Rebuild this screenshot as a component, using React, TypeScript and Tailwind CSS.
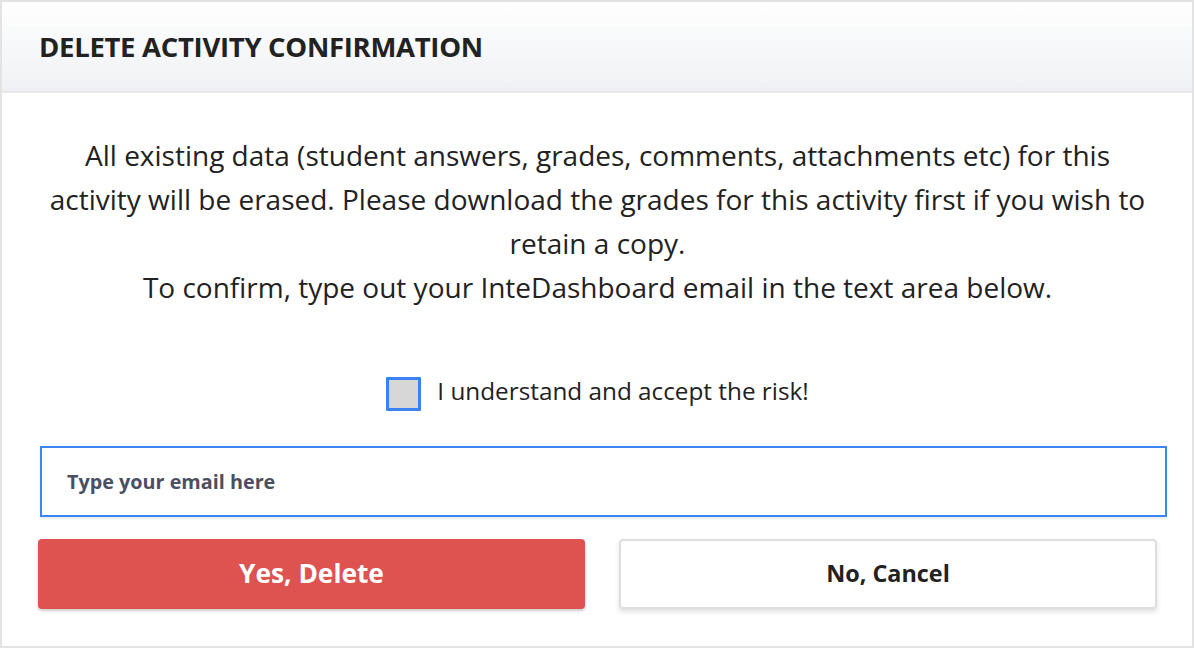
import React from "react";

export default function App() {
  return (
    <div
      className="w-[1194px] h-[648px] bg-white border-2 border-[#e3e3e3] flex flex-col text-[#222]"
      style={{ fontFamily: '"Open Sans", "Noto Sans", Arial, sans-serif' }}
    >
      <div className="h-[91px] shrink-0 bg-gradient-to-b from-white to-[#eff1f4] border-b-2 border-[#e8e8e8] flex items-center px-[37px]">
        <h1 className="text-[27.5px] font-bold tracking-[-0.3px] text-[#222]">DELETE ACTIVITY CONFIRMATION</h1>
      </div>
      <div className="flex flex-col pl-[36px] pr-[35px] pt-[40px]">
        <div className="flex flex-col items-center text-[28px] leading-[44px] text-[#222] whitespace-nowrap">
          <p>All existing data (student answers, grades, comments, attachments etc) for this</p>
          <p>activity will be erased. Please download the grades for this activity first if you wish to</p>
          <p>retain a copy.</p>
          <p>To confirm, type out your InteDashboard email in the text area below.</p>
        </div>
        <div className="mt-[68px] flex items-center justify-center gap-[16px]">
          <span className="w-[35px] h-[34px] border-[3px] border-[#3c82f6] bg-[#d7d7d7] rounded-[1px]" />
          <span className="text-[24.3px] text-[#222] -mt-[6px]">I understand and accept the risk!</span>
        </div>
        <div className="mt-[35px] ml-[2px] w-[1127px] h-[71px] border-2 border-[#3d85f2] flex items-center pl-[25px] shadow-[0_2px_2px_rgba(0,0,0,0.08)]">
          <span className="text-[19.8px] font-bold text-[#4a5061]">Type your email here</span>
        </div>
        <div className="mt-[22px] flex gap-[34px]">
          <button className="w-[548px] h-[70px] rounded-[4px] bg-[#de524f] text-white text-[26.3px] font-bold shadow-[0_2px_3px_rgba(0,0,0,0.2)] flex items-center justify-center">
            Yes, Delete
          </button>
          <button className="w-[539px] h-[70px] rounded-[4px] bg-white border-2 border-[#dedede] text-[#222] text-[23.4px] font-bold shadow-[0_3px_5px_rgba(0,0,0,0.12)] flex items-center justify-center">
            No, Cancel
          </button>
        </div>
      </div>
    </div>
  );
}
